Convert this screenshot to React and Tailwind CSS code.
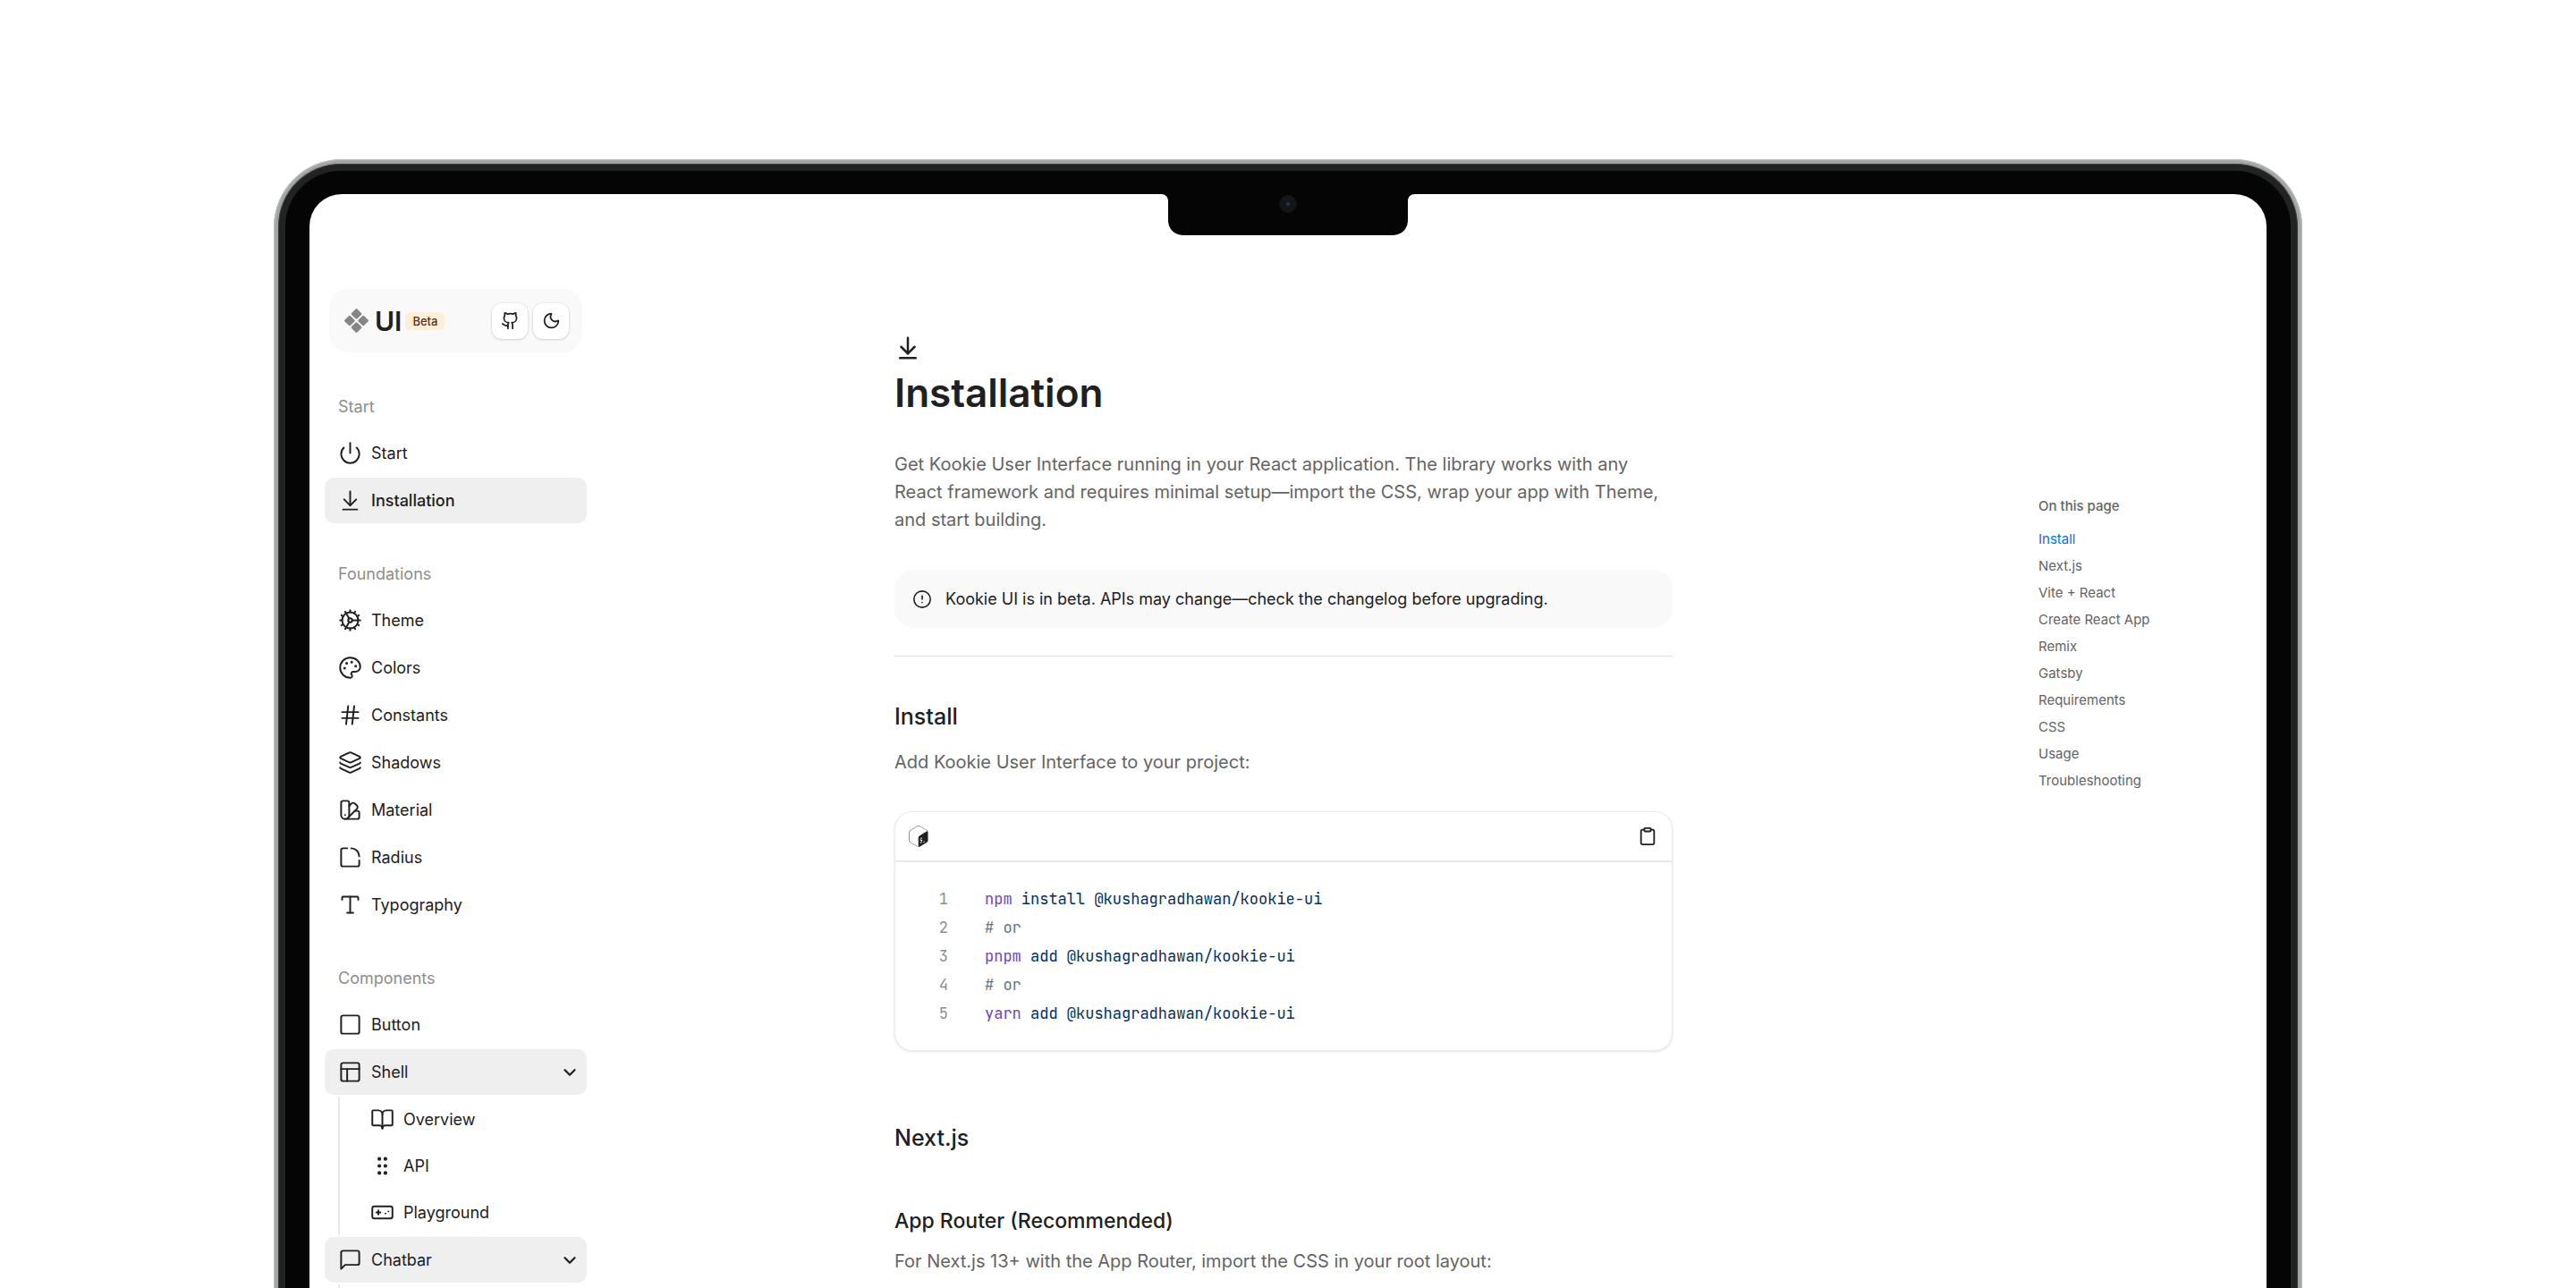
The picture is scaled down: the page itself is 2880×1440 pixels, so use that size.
import { SiGnubash } from "react-icons/si";
import {
  ArrowDownToLine,
  BookOpen,
  ChevronDown,
  CircleAlert,
  Clipboard,
  Cog,
  Gamepad,
  Github,
  GripVertical,
  Hash,
  Layers,
  Moon,
  Palette,
  PanelsTopLeft,
  Power,
  Square,
  SquareRoundCorner,
  SwatchBook,
  Type,
} from "lucide-react";

function ChatIcon({ size, strokeWidth }) {
  return (
    <svg
      width={size}
      height={size}
      viewBox="0 0 24 24"
      fill="none"
      stroke="currentColor"
      strokeWidth={strokeWidth}
      strokeLinecap="round"
      strokeLinejoin="round"
      aria-hidden="true"
    >
      <path d="M21 15a2 2 0 0 1-2 2H7l-4 4V5a2 2 0 0 1 2-2h14a2 2 0 0 1 2 2z" />
    </svg>
  );
}

function Logo() {
  return (
    <svg width="27" height="27" viewBox="0 0 27 27" fill="#868686" aria-hidden="true">
      <rect x="9" y="1.4" width="9" height="9" rx="1.4" transform="rotate(45 13.5 5.9)" />
      <rect x="1.4" y="9" width="9" height="9" rx="1.4" transform="rotate(45 5.9 13.5)" />
      <rect x="16.6" y="9" width="9" height="9" rx="1.4" transform="rotate(45 21.1 13.5)" />
      <rect x="9" y="16.6" width="9" height="9" rx="1.4" transform="rotate(45 13.5 21.1)" />
    </svg>
  );
}

function Notch() {
  return (
    <div className="absolute inset-x-0 -top-px flex justify-center">
      <svg width="284" height="48" viewBox="0 0 284 48" aria-hidden="true">
        <path
          d="M0 0H284V1C279 1 276 4 276 9V30C276 40 269 47 259 47H25C15 47 8 40 8 30V9C8 4 5 1 0 1Z"
          fill="#050505"
        />
        <circle cx="142" cy="12" r="10" fill="#151515" />
        <circle cx="142" cy="12" r="2" fill="#1d3a66" />
      </svg>
    </div>
  );
}

const sections = [
  {
    title: "Start",
    items: [
      { label: "Start", icon: Power },
      { label: "Installation", icon: ArrowDownToLine, active: true },
    ],
  },
  {
    title: "Foundations",
    items: [
      { label: "Theme", icon: Cog },
      { label: "Colors", icon: Palette },
      { label: "Constants", icon: Hash },
      { label: "Shadows", icon: Layers },
      { label: "Material", icon: SwatchBook },
      { label: "Radius", icon: SquareRoundCorner },
      { label: "Typography", icon: Type },
    ],
  },
  {
    title: "Components",
    items: [
      { label: "Button", icon: Square },
      {
        label: "Shell",
        icon: PanelsTopLeft,
        children: [
          { label: "Overview", icon: BookOpen },
          { label: "API", icon: GripVertical },
          { label: "Playground", icon: Gamepad },
        ],
      },
      { label: "Chatbar", icon: ChatIcon, children: [{ label: "Overview", icon: BookOpen }] },
    ],
  },
];

const rowClass = "flex h-[51px] w-full items-center gap-[10px] rounded-[10px] px-[15px] text-left text-[18px]";

function NavItem({ item }) {
  const Icon = item.icon;
  if (item.children) {
    return (
      <li className="flex flex-col gap-0.5">
        <button type="button" aria-expanded="true" className={`${rowClass} bg-[#efefef]`}>
          <Icon size={27} strokeWidth={1.75} />
          <span className="flex-1">{item.label}</span>
          <ChevronDown size={22} strokeWidth={2.5} className="-mr-[7px]" />
        </button>
        <ul className="ml-[15px] flex flex-col gap-px border-l-2 border-[#e8e8e8] pl-[19px]">
          {item.children.map((child) => (
            <NavItem key={child.label} item={child} />
          ))}
        </ul>
      </li>
    );
  }
  return (
    <li>
      <a
        href={`#${item.label.toLowerCase()}`}
        aria-current={item.active ? "page" : undefined}
        className={item.active ? `${rowClass} bg-[#efefef] font-medium` : rowClass}
      >
        <Icon size={27} strokeWidth={1.75} />
        {item.label}
      </a>
    </li>
  );
}

function Sidebar() {
  return (
    <aside className="w-[327px] shrink-0 px-[17px] pt-[106px]">
      <header className="mx-[5px] flex h-[71px] items-center rounded-[22px] bg-[#f9f9f9] pr-[15px] pl-[17px]">
        <a href="#home" className="flex items-center gap-[7px]">
          <Logo />
          <span className="text-[30px] leading-none font-semibold">UI</span>
        </a>
        <span className="ml-1 rounded-[6px] bg-[#ffeed8] px-2 text-[13px] leading-5 font-medium text-[#5b2f1f]">
          Beta
        </span>
        <div className="ml-auto flex gap-[6px]">
          <button
            type="button"
            aria-label="GitHub"
            className="grid size-10 place-items-center rounded-[11px] bg-white shadow-[0_0_1px_1px_rgba(0,0,0,0.04),0_1px_3px_rgba(0,0,0,0.14)]"
          >
            <Github size={21} strokeWidth={2} />
          </button>
          <button
            type="button"
            aria-label="Dark mode"
            className="grid size-10 place-items-center rounded-[11px] bg-white shadow-[0_0_1px_1px_rgba(0,0,0,0.04),0_1px_3px_rgba(0,0,0,0.14)]"
          >
            <Moon size={21} strokeWidth={2} />
          </button>
        </div>
      </header>
      <nav className="mt-[36px] flex flex-col gap-8" aria-label="Documentation">
        {sections.map((section) => (
          <section key={section.title}>
            <h2 className="mb-px px-[15px] text-[18px] leading-[50px] text-[#8d8d8d]">{section.title}</h2>
            <ul className="flex flex-col gap-0.5">
              {section.items.map((item) => (
                <NavItem key={item.label} item={item} />
              ))}
            </ul>
          </section>
        ))}
      </nav>
    </aside>
  );
}

const codeLines = [
  [["npm", "text-[#6f42c1]"], [" install @kushagradhawan/kookie-ui", "text-[#032f62]"]],
  [["# or", "text-[#6a737d]"]],
  [["pnpm", "text-[#6f42c1]"], [" add @kushagradhawan/kookie-ui", "text-[#032f62]"]],
  [["# or", "text-[#6a737d]"]],
  [["yarn", "text-[#6f42c1]"], [" add @kushagradhawan/kookie-ui", "text-[#032f62]"]],
];

function CodeCard() {
  return (
    <div className="mt-[39px] rounded-[20px] border border-[#ebebeb] bg-white shadow-[0_1px_3px_rgba(0,0,0,0.12)]">
      <div className="flex h-[56px] items-center justify-between border-b-2 border-[#e8e8e8] pr-4 pl-[14px]">
        <SiGnubash size={24} aria-label="Bash" />
        <button type="button" aria-label="Copy code">
          <Clipboard size={22} strokeWidth={2} />
        </button>
      </div>
      <ol className="py-[25px] font-['JetBrains_Mono','DejaVu_Sans_Mono',monospace] text-[17px] leading-8">
        {codeLines.map((line, i) => (
          <li key={i} className="flex gap-[41px]">
            <span className="w-[59px] text-right text-[#8d8d8d]">{i + 1}</span>
            <code className="font-[inherit] whitespace-pre">
              {line.map(([text, color]) => (
                <span key={text} className={color}>
                  {text}
                </span>
              ))}
            </code>
          </li>
        ))}
      </ol>
    </div>
  );
}

function Article() {
  return (
    <main className="flex flex-1 justify-center pt-[157px]">
      <article className="w-full max-w-[870px]">
        <ArrowDownToLine size={30} strokeWidth={2} />
        <h1 className="mt-[7px] text-[44px] leading-[56px] font-semibold">Installation</h1>
        <p className="mt-[37px] text-[20px] leading-[31px] text-[#646464]">
          Get Kookie User Interface running in your React application. The library works with any React framework and
          requires minimal setup—import the CSS, wrap your app with Theme, and start building.
        </p>
        <div
          role="note"
          className="mt-[40px] flex h-[65px] items-center gap-[15px] rounded-[22px] bg-[#f9f9f9] px-5 text-[18px]"
        >
          <CircleAlert size={22} strokeWidth={1.75} />
          Kookie UI is in beta. APIs may change—check the changelog before upgrading.
        </div>
        <hr className="mt-[31px] border-[#dedede]" />
        <h2 className="mt-[51px] text-[25px] leading-8 font-medium">Install</h2>
        <p className="mt-[20px] text-[20px] leading-[31px] text-[#646464]">Add Kookie User Interface to your project:</p>
        <CodeCard />
        <h2 className="mt-[81px] text-[25px] leading-8 font-medium">Next.js</h2>
        <h3 className="mt-[61px] text-[23px] leading-8 font-medium">App Router (Recommended)</h3>
        <p className="mt-[14px] text-[20px] leading-[31px] text-[#646464]">
          For Next.js 13+ with the App Router, import the CSS in your root layout:
        </p>
      </article>
    </main>
  );
}

const headings = [
  "Install",
  "Next.js",
  "Vite + React",
  "Create React App",
  "Remix",
  "Gatsby",
  "Requirements",
  "CSS",
  "Usage",
  "Troubleshooting",
];

function TableOfContents() {
  return (
    <aside className="w-[337px] shrink-0 pt-[334px] pl-[82px] text-[15px] leading-[30px] text-[#646464]">
      <h2 className="mb-[7px] font-medium">On this page</h2>
      <ul>
        {headings.map((heading, i) => (
          <li key={heading}>
            <a href={`#${heading}`} className={i === 0 ? "text-[#0074e0]" : ""}>
              {heading}
            </a>
          </li>
        ))}
      </ul>
    </aside>
  );
}

export default function App() {
  return (
    <div className="h-screen overflow-hidden bg-white px-[306px] pt-[178px] font-['Inter',sans-serif] text-[#202020]">
      <div className="rounded-t-[76px] bg-[#a1a2a4] px-[5px] pt-[5px] shadow-[inset_0_0_2px_1px_#c4c4c6]">
        <div className="rounded-t-[70px] border border-b-0 border-[#3c3c3c] bg-[#212222] px-[7px] pt-[7px]">
          <div className="rounded-t-[62px] bg-[#050505] px-[27px] pt-[26px]">
            <div className="relative flex min-h-screen rounded-t-[36px] bg-white">
              <Notch />
              <Sidebar />
              <Article />
              <TableOfContents />
            </div>
          </div>
        </div>
      </div>
    </div>
  );
}
